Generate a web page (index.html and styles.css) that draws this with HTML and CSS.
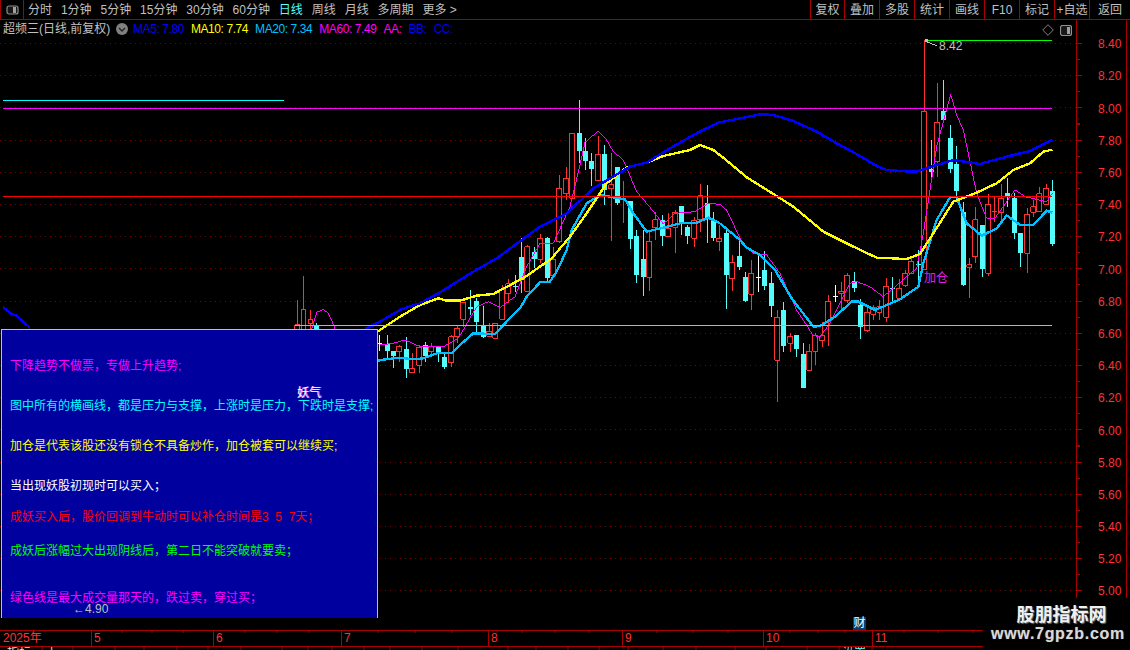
FILE: index.html
```html
<!DOCTYPE html>
<html lang="zh-CN">
<head>
<meta charset="utf-8">
<title>超频三 日线</title>
<link rel="stylesheet" href="styles.css">
</head>
<body>
<header class="topbar">
  <div class="toggle"><svg class="split-icon" viewBox="0 0 13 10"><rect x="1" y="1" width="11" height="8" rx="2" class="split-frame"/><rect x="7" y="2" width="3" height="6" class="split-fill"/></svg></div>
  <nav class="periods">
    <span>分时</span><span>1分钟</span><span>5分钟</span><span>15分钟</span><span>30分钟</span><span>60分钟</span><span class="active">日线</span><span>周线</span><span>月线</span><span>多周期</span><span>更多 &gt;</span>
  </nav>
  <nav class="tools">
    <span>复权</span><span>叠加</span><span>多股</span><span>统计</span><span>画线</span><span>F10</span><span>标记</span><span>+自选</span><span>返回</span>
  </nav>
</header>
<main class="main">
  <section class="plot">
    <svg class="chart" viewBox="0 20 1076 610">
      <path class="grid" d="M0 43.5H1076M0 75.5H1076M0 107.5H1076M0 140.5H1076M0 172.5H1076M0 204.5H1076M0 236.5H1076M0 268.5H1076M0 301.5H1076M0 333.5H1076M0 365.5H1076M0 397.5H1076M0 429.5H1076M0 462.5H1076M0 494.5H1076M0 526.5H1076M0 558.5H1076M0 590.5H1076"/>

      <g transform="translate(285 270) scale(.33333)">
        <path class="wick-red" d="M37 90V178M55 18V178M76 120V178M343 225V275"/>
        <path class="body-red" d="M30 165h15v15h-15zM49 120h14v60h-14zM70 150h14v11h-14zM336 229h15v16h-15z"/>
        <path class="wick-cyan" d="M94 160V178M307 195V270M325 243V293"/>
        <path class="body-cyan" d="M94 167V178M307 222V243M325 243V258"/>
        <path class="wick-white" d="M285 195V243M278 222H292"/>
      </g>

      <g transform="translate(380 90) scale(.33333)">
        <path class="wick-cyan" d="M80 740V863M136 755V815M175 770V815M193 790V838M271 600V675M289 625V735M310 648V745M406 555V605M424 445V608M463 470V535M502 440V580M598 30V220M616 145V240M634 190V288M673 165V345M712 230V345M751 333V478M769 420V578M790 420V617M847 375V468M904 348V436M922 405V462M982 285V458M1000 365V452"/>
        <path class="wick-red" d="M97 790V848M118 765V848M154 760V800M214 735V830M232 708V760M250 635V710M328 700V740M346 700V745M367 585V690M385 568V640M442 465V606M481 432V520M520 470V558M538 255V460M559 232V330M577 130V328M655 138V272M694 190V452M730 272V400M808 425V602M826 365V450M865 370V440M886 360V488M943 380V472M961 282V425M1018 405V482"/>
        <path class="body-red" d="M90 835h15v13h-15zM111 772h15v54h-15zM147 769h15v17h-15zM207 740h15v78h-15zM225 715h15v25h-15zM243 637h15v51h-15zM321 724h15v15h-15zM339 700h15v45h-15zM360 600h15v88h-15zM378 582h15v30h-15zM435 470h15v134h-15zM474 445h15v63h-15zM513 510h15v48h-15zM531 295h15v160h-15zM552 265h15v47h-15zM570 130h15v195h-15zM648 193h15v79h-15zM687 285h15v11h-15zM801 454h15v108h-15zM819 390h15v24h-15zM858 415h15v25h-15zM879 367h15v45h-15zM936 391h15v54h-15zM954 318h15v72h-15zM1011 445h15v10h-15z"/>
        <path class="body-cyan" d="M80 777V838M136 765V797M175 770V790M193 800V830M271 652V656M289 633V695M310 707V740M406 588V592M424 502V570M463 485V508M502 445V563M598 130V182M616 184V212M634 213V236M673 192V300M712 232V338M751 333V448M769 438V554M790 508V560M847 390V438M904 348V398M922 410V438M982 340V385M1000 390V443"/>
      </g>

      <g transform="translate(720 90) scale(.33333)">
        <path class="wick-cyan" d="M19 420V656M58 445V540M76 545V635M133 483V600M154 545V680M190 635V785M229 735V800M250 760V895M403 547V605M421 628V747M517 562V635M595 480V590M634 150V262M670 -30V90M691 105V250M709 168V320M730 335V588M787 405V560M862 265V350M883 310V448M901 430V530M997 270V467"/>
        <path class="wick-red" d="M37 495V603M94 510V660M172 660V935M211 728V785M268 762V842M286 730V825M307 695V770M325 615V768M364 575V660M382 550V640M442 655V725M460 645V690M478 630V690M499 565V695M538 568V632M556 540V590M574 505V552M613 -150V540M652 -20V260M748 505V625M766 350V520M805 312V558M823 320V396M844 282V400M922 355V548M940 330V380M958 292V365M979 282V345M816 365H831"/>
        <path class="wick-white" d="M115 497V607M108 563H122M346 585V636M339 621H353"/>
        <path class="body-red" d="M30 517h15v49h-15zM87 550h15v63h-15zM165 682h15v129h-15zM204 739h15v21h-15zM261 784h15v57h-15zM279 736h15v48h-15zM300 737h15v16h-15zM318 634h15v61h-15zM357 604h15v6h-15zM375 556h15v76h-15zM435 667h15v55h-15zM453 652h15v21h-15zM471 650h15v17h-15zM492 589h15v93h-15zM531 595h15v30h-15zM549 550h15v36h-15zM567 514h15v36h-15zM606 64h15v475h-15zM645 97h15v118h-15zM741 524h15v8h-15zM759 390h15v110h-15zM798 343h15v207h-15zM837 325h15v43h-15zM915 373h15v117h-15zM933 350h15v17h-15zM951 311h15v54h-15zM972 295h15v48h-15z"/>
        <path class="body-cyan" d="M19 430V554M58 498V530M76 561V632M133 540V587M154 580V647M190 660V767M229 736V776M250 792V893M403 574V593M421 646V710M517 595V598M595 523V525M634 237V245M670 64V90M691 145V236M709 222V303M730 365V585M787 405V537M862 310V320M883 323V428M901 430V488M997 303V461"/>
      </g>

      <polyline class="ma-blue" points="3,307 10,313 17,316 30,328"/>
      <polyline class="ma-blue" points="365,329 380,321.7"/>
      <polyline class="ma-yellow" points="378,332 380,330"/>
      <polyline class="ma-sky" points="378,361 380,360"/>

      <g transform="translate(285 270) scale(.33333)">
        <polyline class="ma-pink" points="80,178 95,127 115,118 130,130 142,155 150,178"/>
      </g>

      <g transform="translate(380 90) scale(.33333)">
        <polyline class="ma-pink" points="0,765 40,760 75,750 120,770 190,770 235,745 290,650 325,635 360,653 405,620 440,530 480,460 520,460 570,350 600,225 615,157 655,123 680,150 700,185 730,210 770,305 800,340 850,402 885,370 945,365 985,340 1020,343"/>
        <polyline class="ma-sky" points="0,810 60,803 100,808 130,805 170,790 215,790 240,765 280,730 345,732 380,695 420,655 440,620 480,577 510,575 530,545 560,480 575,420 620,340 660,315 700,322 735,328 760,370 800,425 850,413 900,400 945,400 985,383 1020,400"/>
        <polyline class="ma-yellow" points="0,720 60,680 120,645 175,625 200,632 240,632 290,617 340,612 400,580 440,558 515,505 570,440 620,370 680,280 740,232 800,218 850,198 930,180 960,165 1000,180 1020,196"/>
        <polyline class="ma-blue" points="0,695 60,660 120,640 180,607 280,545 350,505 480,410 560,370 640,295 750,230 800,218 870,175 950,130 1020,95"/>
      </g>

      <g transform="translate(720 90) scale(.33333)">
        <polyline class="ma-pink" points="0,343 20,360 70,465 100,490 140,495 180,550 230,660 280,737 300,740 330,700 390,580 410,575 450,590 490,620 590,535 610,430 650,170 692,13 710,75 730,120 770,310 800,385 825,385 885,300 915,320 980,335 997,310"/>
        <polyline class="ma-sky" points="0,400 60,450 80,473 120,495 165,540 215,625 280,710 300,708 345,680 395,635 415,635 465,660 540,628 595,590 610,520 650,390 690,322 710,322 740,400 785,437 830,415 860,376 900,405 940,405 980,362 997,368"/>
        <polyline class="ma-yellow" points="0,195 60,245 80,262 170,318 220,350 310,425 400,470 470,503 560,507 600,492 640,430 700,335 770,308 830,280 880,240 930,220 970,185 997,179"/>
        <polyline class="ma-blue" points="0,97 60,85 120,73 160,75 220,93 290,125 350,160 400,187 440,210 470,228 500,240 540,243 590,245 620,235 640,228 700,210 780,222 860,200 930,183 997,150"/>
      </g>

      <path class="h-cyan" d="M3 100.5H284M295 325.5H1052"/>
      <path class="h-pink" d="M3 108.5H1052"/>
      <path class="h-red" d="M3 196.5H1052"/>
      <path class="h-green" d="M925 40.5H1052"/>
      <path class="arrow" d="M925 41l12 5"/>
      <rect class="peak-dot" x="925" y="39" width="3" height="3"/>
    </svg>

    <div class="legend">
      <span class="stock">超频三(日线,前复权)</span>
      <svg class="chevron" viewBox="0 0 12 12"><circle cx="6" cy="6" r="6" class="chevron-bg"/><path d="M3 5l3 3 3-3" class="chevron-mark"/></svg>
      <span class="val c-blue">MA5: 7.80</span>
      <span class="val c-yellow">MA10: 7.74</span>
      <span class="val c-sky">MA20: 7.34</span>
      <span class="val c-pink">MA60: 7.49</span>
      <span class="val c-pink">AA:</span>
      <span class="val c-blue">BB:</span>
      <span class="val c-navy">CC:</span>
    </div>

    <svg class="diamond" viewBox="0 0 12 12"><path d="M6 .7L11.3 6 6 11.3.7 6z"/></svg>
    <svg class="split-corner" viewBox="0 0 12 11"><rect x=".5" y=".5" width="11" height="10" rx="2" class="split-frame"/><rect x="7" y="2" width="3" height="7" class="split-fill"/></svg>

    <span class="tag high">8.42</span>
    <span class="tag add">加仓</span>

    <aside class="notice">
      <p class="c-pink">下降趋势不做票，专做上升趋势;</p>
      <p class="c-cyan wide">图中所有的横画线，都是压力与支撑，上涨时是压力，下跌时是支撑;</p>
      <p class="c-yellow wide">加仓是代表该股还没有锁仓不具备炒作，加仓被套可以继续买;</p>
      <p class="c-white wide">当出现妖股初现时可以买入；</p>
      <p class="c-red tight">成妖买入后，股价回调到牛动时可以补仓时间是3&nbsp;&nbsp;5&nbsp;&nbsp;7天；</p>
      <p class="c-green mid">成妖后涨幅过大出现阴线后，第二日不能突破就要卖；</p>
      <p class="c-pink far">绿色线是最大成交量那天的，跌过卖，穿过买；</p>
    </aside>

    <span class="tag demon">妖气</span>
    <span class="tag low">←4.90</span>
    <span class="tag cai">财</span>
  </section>

  <aside class="price-axis">
    <span>8.40</span><span>8.20</span><span>8.00</span><span>7.80</span><span>7.60</span><span>7.40</span><span>7.20</span><span>7.00</span><span>6.80</span><span>6.60</span><span>6.40</span><span>6.20</span><span>6.00</span><span>5.80</span><span>5.60</span><span>5.40</span><span>5.20</span><span>5.00</span>
  </aside>
</main>

<footer class="time-axis">
  <div class="months">
    <span class="m m-y">2025年</span><span class="m m5">5</span><span class="m m6">6</span><span class="m m7">7</span><span class="m m8">8</span><span class="m m9">9</span><span class="m m10">10</span><span class="m m11">11</span>
    <svg class="time-ticks" viewBox="0 0 1130 15"><path d="M122 0v2M152 0v2M183 0v2M245 0v2M277 0v2M309 0v2M378 0v2M415 0v2M452 0v2M522 0v2M555 0v2M589 0v2M657 0v2M693 0v2M728 0v2M790 0v2M818 0v2M845 0v2M904 0v2M938 0v2M973 0v2"/></svg>
  </div>
  <div class="strip">
    <svg class="strip-ticks" viewBox="0 0 1130 4"><path d="M42 0v4M73 0v4M115 0v4M144 0v4M177 0v4M208 0v4M241 0v4M282 0v4M308 0v4M332 0v4M364 0v4M390 0v4M422 0v4M458 0v4M508 0v4M536 0v4M568 0v4M599 0v4M628 0v4M663 0v4M696 0v4M735 0v4M766 0v4M807 0v4M839 0v4M872 0v4"/></svg>
    <span class="strip-a">指标</span><span class="strip-b">上</span><span class="strip-c">设置</span>
  </div>
</footer>

<div class="watermark">
  <strong>股朋指标网</strong>
  <em>www.7gpzb.com</em>
</div>
</body>
</html>
```

FILE: styles.css
```css
* { box-sizing: border-box; }
html, body { margin: 0; padding: 0; }
body {
  position: relative;
  width: 1130px;
  height: 650px;
  overflow: hidden;
  background: #000;
  color: #c0c0c0;
  font: 12px/14px "Liberation Sans", "Noto Sans CJK SC", sans-serif;
  display: flex;
  flex-direction: column;
}

/* top bar */
.topbar {
  height: 20px;
  flex: none;
  display: flex;
  align-items: stretch;
  border-bottom: 1px solid #a80000;
}
.toggle {
  width: 24px;
  border-right: 1px solid #a80000;
  border-left: 1px solid #a80000;
  display: flex;
  align-items: center;
  justify-content: center;
}
.split-icon { width: 13px; height: 10px; }
.split-frame { fill: #181818; stroke: #909090; stroke-width: 1.2; }
.split-fill { fill: #a0a0a0; }
.periods {
  display: flex;
  gap: 8.9px;
  padding-left: 4px;
  align-items: center;
  white-space: nowrap;
}
.periods .active { color: #54fcfc; }
.tools {
  margin-left: auto;
  display: flex;
  align-items: stretch;
  white-space: nowrap;
}
.tools span {
  width: 35px;
  border-left: 1px solid #a80000;
  display: flex;
  align-items: center;
  justify-content: center;
}
.tools span:first-child { width: 34px; }
.tools span:last-child { width: 41px; }

/* main chart */
.main {
  height: 610px;
  flex: none;
  display: flex;
}
.plot {
  position: relative;
  width: 1076px;
  flex: none;
}
.chart {
  display: block;
  width: 1076px;
  height: 610px;
}
.chart path, .chart polyline { fill: none; shape-rendering: crispEdges; }
.grid { stroke: #7a0000; stroke-width: 1; stroke-dasharray: 1 4; }
.wick-red { stroke: #ff3232; stroke-width: 3; }
.wick-cyan { stroke: #54fcfc; stroke-width: 3; }
.wick-white { stroke: #fff; stroke-width: 3; }
.chart .body-red { fill: #000; stroke: #ff3232; stroke-width: 3; }
.body-cyan { stroke: #54fcfc; stroke-width: 16; }
.ma-blue { stroke: #0000ff; stroke-width: 2.5; }
.ma-yellow { stroke: #ffff00; stroke-width: 2.4; }
.ma-sky { stroke: #00c0ff; stroke-width: 2.4; }
.ma-pink { stroke: #ff00ff; stroke-width: 1; }
g .ma-blue { stroke-width: 7.5; }
g .ma-yellow { stroke-width: 7; }
g .ma-sky { stroke-width: 7; }
g .ma-pink { stroke-width: 3; }
.h-cyan { stroke: #00ffff; stroke-width: 1; }
.h-pink { stroke: #ff00ff; stroke-width: 1; }
.h-red { stroke: #ff0000; stroke-width: 1; }
.h-green { stroke: #00ff00; stroke-width: 1; }
.arrow { stroke: #c0c0c0; stroke-width: 1; }
.peak-dot { fill: #c0c0c0; }

/* legend row */
.legend {
  position: absolute;
  left: 3px;
  top: 2px;
  display: flex;
  align-items: center;
  height: 14px;
  white-space: nowrap;
}
.stock { width: 113px; }
.chevron { width: 12px; height: 12px; margin-right: 5px; }
.chevron-bg { fill: #808080; }
.chevron-mark { fill: none; stroke: #222; stroke-width: 1.4; }
.val { letter-spacing: -.42px; margin-right: 7px; }
.c-blue { color: #0000ff; }
.c-navy { color: #0000e0; }
.c-yellow { color: #ffff00; }
.c-sky { color: #00c0ff; }
.c-pink { color: #ff00ff; }
.c-cyan { color: #00ffff; }
.c-white { color: #fff; }
.c-red { color: #ff0000; }
.c-green { color: #00ff00; }

.diamond {
  position: absolute;
  left: 1042px;
  top: 4px;
  width: 12px;
  height: 12px;
  fill: none;
  stroke: #808080;
}
.split-corner {
  position: absolute;
  left: 1060px;
  top: 5px;
  width: 12px;
  height: 11px;
}

/* notes panel */
.notice {
  position: absolute;
  left: 1px;
  top: 309px;
  width: 377px;
  height: 289px;
  padding: 29px 0 0 8px;
  background: #00009f;
  border: 1px solid #c0c0c0;
  border-bottom: 0;
}
.notice p {
  margin: 0;
  height: 14px;
  white-space: nowrap;
}
.notice .wide { margin-top: 26px; }
.notice .tight { margin-top: 17px; }
.notice .mid { margin-top: 20px; }
.notice .far { margin-top: 33px; }

/* chart labels */
.tag { position: absolute; white-space: nowrap; }
.high { left: 939px; top: 19px; color: #c0c0c0; }
.add { left: 924px; top: 251px; color: #e020e0; }
.demon { left: 297px; top: 366px; color: #fff; text-shadow: 1px 0 0 #ff60ff; }
.low { left: 73px; top: 582px; color: #c0c0c0; }
.cai {
  left: 853px;
  top: 597px;
  width: 13px;
  height: 13px;
  line-height: 13px;
  text-align: center;
  background: #004070;
  color: #fff;
}

/* price axis */
.price-axis {
  position: relative;
  width: 51px;
  flex: none;
  padding-top: 8.2px;
  border-left: 1px solid #a80000;
  border-right: 1px solid #a80000;
  color: #ff3232;
  background:
    repeating-linear-gradient(to bottom, #a80000 0 1px, transparent 1px 32.2px) 0 23px / 5px 100% no-repeat,
    repeating-linear-gradient(to bottom, #a80000 0 1px, transparent 1px 16.1px) 0 23px / 3px 100% no-repeat;
}
.price-axis span {
  display: flex;
  align-items: center;
  height: 32.2px;
  padding-left: 21px;
}

/* time axis */
.time-axis {
  height: 20px;
  flex: none;
  color: #ff3232;
}
.months {
  position: relative;
  height: 17px;
  border-top: 1px solid #a80000;
  border-bottom: 1px solid #a80000;
}
.time-ticks {
  position: absolute;
  left: 0;
  top: 0;
  width: 1130px;
  height: 15px;
  stroke: #a80000;
  fill: none;
}
.m {
  position: absolute;
  top: 0;
  height: 15px;
  padding-left: 2px;
  line-height: 15px;
  border-left: 1px solid #a80000;
}
.m-y { left: 1px; border-left: 0; }
.m5 { left: 91px; }
.m6 { left: 213px; }
.m7 { left: 341px; }
.m8 { left: 488px; }
.m9 { left: 622px; }
.m10 { left: 763px; }
.m11 { left: 872px; }
.strip {
  position: relative;
  height: 3px;
  overflow: hidden;
}
.strip-ticks {
  position: absolute;
  left: 0;
  top: 0;
  width: 1130px;
  height: 4px;
  stroke: #a80000;
  fill: none;
}
.strip span { position: absolute; top: 0; line-height: 12px; color: #e0e0e0; }
.strip-a { left: 7px; }
.strip-b { left: 46px; }
.strip .strip-c { left: 842px; color: #54fcfc; }

/* watermark */
.watermark {
  position: absolute;
  left: 983px;
  top: 598px;
  width: 147px;
  height: 52px;
  background: #000;
  display: flex;
  flex-direction: column;
  align-items: center;
  color: #f0f0f0;
}
.watermark strong {
  margin: 6px 0 0 10px;
  font-size: 18px;
  line-height: 22px;
  font-weight: 700;
  text-shadow: 1px 1px 1px #777;
}
.watermark em {
  margin: -1px 0 0 3px;
  font-size: 16px;
  line-height: 18px;
  font-style: normal;
  font-weight: 700;
  letter-spacing: .7px;
  color: #d8d8d8;
  text-shadow: 0 0 1px #666;
}
```
